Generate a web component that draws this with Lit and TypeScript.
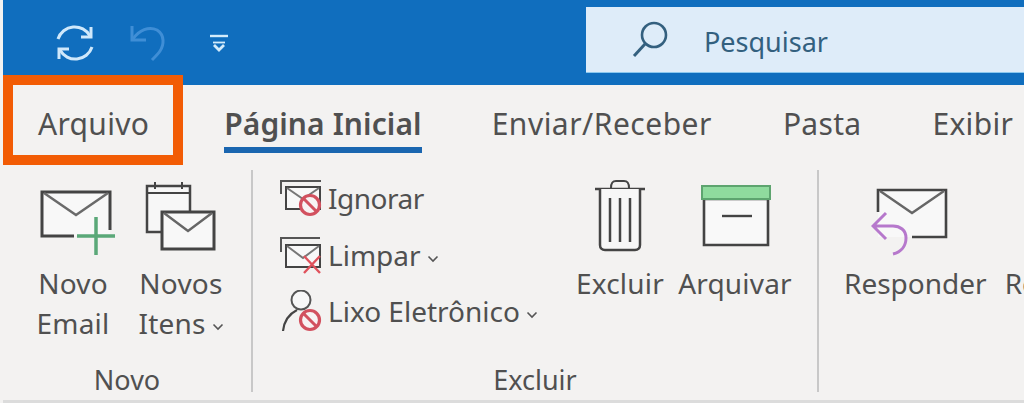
import { LitElement, html, css, svg } from "lit";
import { customElement } from "lit/decorators.js";

const chevron = html`<svg class="chev" width="12" height="8" viewBox="0 0 12 8"><path d="M1.5 1.5 6 6l4.5-4.5" fill="none" stroke="#555" stroke-width="1.6"/></svg>`;

const prohibit = (cx: number, cy: number) => svg`
  <circle cx="${cx}" cy="${cy}" r="9.5" fill="#f7f3f3" stroke="#d2515f" stroke-width="3.2"/>
  <path d="M${cx - 6.5} ${cy - 6.5}l13 13" stroke="#d2515f" stroke-width="3"/>`;

@customElement("app-root")
export class AppRoot extends LitElement {
  static styles = css`
    :host { display: block; width: 1024px; height: 403px; overflow: hidden; position: relative;
      font-family: "Noto Sans", "Open Sans", sans-serif; color: #505050; background: #f3f2f1; }
    svg { display: block; flex: none; }
    .title { height: 85px; margin-left: 3px; background: #106ebe; display: flex; align-items: flex-start; box-sizing: border-box; padding: 7px 0 0 0; }
    .qat { display: flex; align-items: center; width: 583px; height: 72px; padding-left: 50px; box-sizing: border-box; }
    .i-undo { margin-left: 32px; }
    .i-more { margin-left: 43px; }
    .search { flex: 1; height: 66px; background: #deecf9; display: flex; align-items: center; padding-left: 46px; gap: 34px; color: #33607f; font-size: 27px; border-bottom: 1px solid #8cc8ee; box-sizing: border-box; }
    .search span { padding-top: 4px; }
    .tabs { height: 80px; display: flex; align-items: flex-start; padding-left: 38px; font-size: 30px; letter-spacing: 0.3px; box-sizing: border-box; }
    .tab { margin-right: 71px; padding-top: 17px; line-height: 44px; white-space: nowrap; }
    .tab.file { margin-right: 75px; }
    .tab.send { letter-spacing: 0.5px; }
    .tab.active { font-weight: 600; letter-spacing: 0.1px; margin-right: 70px; }
    .tab.active::after { content: ""; display: block; height: 6px; background: #1a66b0; margin-top: 1px; }
    .ribbon { height: 238px; display: flex; margin-left: 3px; border-bottom: 3px solid #dcdcdc; box-sizing: border-box; overflow: hidden; align-items: stretch; }
    .group { display: flex; flex-direction: column; flex: none; box-sizing: border-box; padding-top: 15px; }
    .group.novo { width: 248px; }
    .group.excluir { width: 564px; }
    .group.resp { width: 205px; }
    .sep { width: 2px; flex: none; background: #c8c8c8; margin: 5px 0 8px; }
    .items { flex: 1; display: flex; align-items: flex-start; }
    .label { text-align: center; font-size: 27px; line-height: 34px; padding-bottom: 3px; }
    .big { display: flex; flex-direction: column; align-items: center; flex: none; font-size: 28px; letter-spacing: 0.2px; line-height: 40px; text-align: center; white-space: nowrap; }
    .big .icon { height: 83px; display: flex; align-items: flex-start; justify-content: center; }
    .big.email { width: 112px; margin-left: 14px; }
    .big.itens { width: 100px; margin-left: 2px; }
    .big.del { width: 96px; margin-left: -4px; }
    .big.arch { width: 118px; margin-left: 8px; }
    .big.reply { margin-left: 25px; letter-spacing: 0; }
    .big.all { margin-left: 18px; letter-spacing: 0; }
    .i-email { margin: 9px 0 0 12px; }
    .i-arch { margin: 5px 0 0 2px; }
    .i-reply { margin: 8px 0 0 -10px; }
    .chev { display: inline-block; margin-left: 6px; vertical-align: 3px; }
    .stack { display: flex; flex-direction: column; gap: 16.5px; width: 296px; margin: -2px 0 0 27px; flex: none; }
    .row { display: flex; align-items: center; height: 40px; gap: 6px; font-size: 28px; white-space: nowrap; }
    .row .rt { line-height: 40px; }
    .row .tight { letter-spacing: -0.5px; }
    .orange { position: absolute; left: 3px; top: 75px; width: 180px; height: 90px; border: 10px solid #f25c05; box-sizing: border-box; }
  `;

  render() {
    return html`
      <div class="title">
        <div class="qat">
          <svg width="44" height="44" viewBox="0 0 44 44" fill="none" stroke="#cfe8fb" stroke-width="3">
            <path d="M5 18A17.5 17.5 0 0 1 37 15"/>
            <path d="M39 26A17.5 17.5 0 0 1 7 29"/>
            <path d="M38 6v10H28M6 38V28h10"/>
          </svg>
          <svg class="i-undo" width="38" height="40" viewBox="0 0 38 40" fill="none" stroke="#3f8ed6" stroke-width="3">
            <path d="M3 3v14h14"/>
            <path d="M4 16C10 7 20 3 28 7c8 5 7 15 3 21-2 3-5 6-8 9"/>
          </svg>
          <svg class="i-more" width="18" height="18" viewBox="0 0 18 18" fill="none" stroke="#d3ebfb" stroke-width="2.8">
            <path d="M0 2h18" stroke-width="2.4"/><path d="M3 8.5h12" stroke-width="1.8"/><path d="M4 11l5 5 5-5"/>
          </svg>
        </div>
        <div class="search">
          <svg width="38" height="40" viewBox="0 0 38 40" fill="none" stroke="#34607f" stroke-width="2.6">
            <circle cx="22" cy="15" r="12"/><path d="M13 24 2 36" stroke-width="3"/>
          </svg>
          <span>Pesquisar</span>
        </div>
      </div>
      <div class="tabs">
        <div class="tab file">Arquivo</div>
        <div class="tab active">Página Inicial</div>
        <div class="tab send">Enviar/Receber</div>
        <div class="tab">Pasta</div>
        <div class="tab">Exibir</div>
      </div>
      <div class="ribbon">
        <div class="group novo">
          <div class="items">
            <div class="big email">
              <div class="icon"><svg class="i-email" width="78" height="68" viewBox="0 0 78 68" fill="none">
                <path d="M2 3h68v44H2z" fill="#f8f8f8"/>
                <path d="M34 47H2V3h68v38" stroke="#444" stroke-width="3"/>
                <path d="M4 4l32 22L68 4" stroke="#6a6a6a" stroke-width="2.5"/>
                <path d="M37 47h38M56 28v38" stroke="#5aa878" stroke-width="3.5"/>
              </svg></div>
              <div class="t">Novo<br>Email</div>
            </div>
            <div class="big itens">
              <div class="icon"><svg width="72" height="72" viewBox="0 0 72 72" fill="none">
                <path d="M2 6h43v46H2z" fill="#f7f7f7" stroke="#444" stroke-width="2.5"/>
                <path d="M2 13h43M10 2v7M37 2v7" stroke="#444" stroke-width="2"/>
                <path d="M17 32h52v37H17z" fill="#f8f8f8" stroke="#444" stroke-width="3"/>
                <path d="M19 33l24 18 24-18" stroke="#666" stroke-width="2.4"/>
              </svg></div>
              <div class="t">Novos<br>Itens${chevron}</div>
            </div>
          </div>
          <div class="label">Novo</div>
        </div>
        <div class="sep"></div>
        <div class="group excluir">
          <div class="items">
            <div class="stack">
              <div class="row">
                <svg width="42" height="38" viewBox="0 0 42 38" fill="none">
                  <path d="M1 15V2h40" stroke="#555" stroke-width="2"/>
                  <path d="M6 8h34v22H6z" fill="#f8f8f8" stroke="#444" stroke-width="2"/>
                  <path d="M7 9l16 11L39 9" stroke="#777" stroke-width="2"/>
                  ${prohibit(30, 26)}
                </svg>
                <span class="rt tight">Ignorar</span>
              </div>
              <div class="row">
                <svg width="42" height="38" viewBox="0 0 42 38" fill="none">
                  <path d="M1 16V2h39" stroke="#555" stroke-width="2"/>
                  <path d="M6 9h34v22H6z" fill="#f8f8f8" stroke="#444" stroke-width="2"/>
                  <path d="M7 10l16 12L39 10" stroke="#777" stroke-width="2"/>
                  <path d="M24 20l16 17M40 20 24 37" stroke="#e0525c" stroke-width="2.4"/>
                </svg>
                <span class="rt">Limpar${chevron}</span>
              </div>
              <div class="row">
                <svg width="42" height="42" viewBox="0 0 42 42" fill="none">
                  <circle cx="21" cy="10" r="9.5" fill="#f7f7f7" stroke="#555" stroke-width="2"/>
                  <path d="M3 41c1-9 6-17 14-21" stroke="#444" stroke-width="2.2"/>
                  ${prohibit(30, 30)}
                </svg>
                <span class="rt">Lixo Eletrônico${chevron}</span>
              </div>
            </div>
            <div class="big del">
              <div class="icon"><svg width="52" height="72" viewBox="0 0 52 72" fill="none" stroke="#444">
                <path d="M1 9h50" stroke-width="2.5"/>
                <path d="M17 8c0-6 2-7 5-7h8c3 0 5 1 5 7" stroke-width="2"/>
                <path d="M6 9v56c0 3 2 5 5 5h30c3 0 5-2 5-5V9" fill="#f7f7f7" stroke-width="2.5"/>
                <path d="M16 18v44M26 18v44M36 18v44" stroke-width="2.5"/>
              </svg></div>
              <div class="t">Excluir</div>
            </div>
            <div class="big arch">
              <div class="icon"><svg class="i-arch" width="70" height="62" viewBox="0 0 70 62" fill="none">
                <path d="M3 14h64v46H3z" fill="#f9f9f9" stroke="#444" stroke-width="2.6"/>
                <path d="M1 1h68v13H1z" fill="#8fdb9e" stroke="#5da46f" stroke-width="2"/>
                <path d="M21 31h30" stroke="#444" stroke-width="2.4"/>
              </svg></div>
              <div class="t">Arquivar</div>
            </div>
          </div>
          <div class="label">Excluir</div>
        </div>
        <div class="sep"></div>
        <div class="group resp">
          <div class="items">
            <div class="big reply">
              <div class="icon"><svg class="i-reply" width="78" height="68" viewBox="0 0 78 68" fill="none">
                <path d="M7 2h68v47H7z" fill="#f8f8f8"/>
                <path d="M7 24V2h68v47H41" stroke="#444" stroke-width="2.6"/>
                <path d="M9 3l32 22L73 3" stroke="#666" stroke-width="2.4"/>
                <path d="M15 25 2 38l13 13M2 38h20c7 0 13 4 13 12 0 8-5 14-13 16" stroke="#b678cc" stroke-width="3"/>
              </svg></div>
              <div class="t">Responder</div>
            </div>
            <div class="big all">
              <div class="icon"></div>
              <div class="t">Responder<br>Tudo</div>
            </div>
          </div>
        </div>
      </div>
      <div class="orange"></div>
    `;
  }
}
